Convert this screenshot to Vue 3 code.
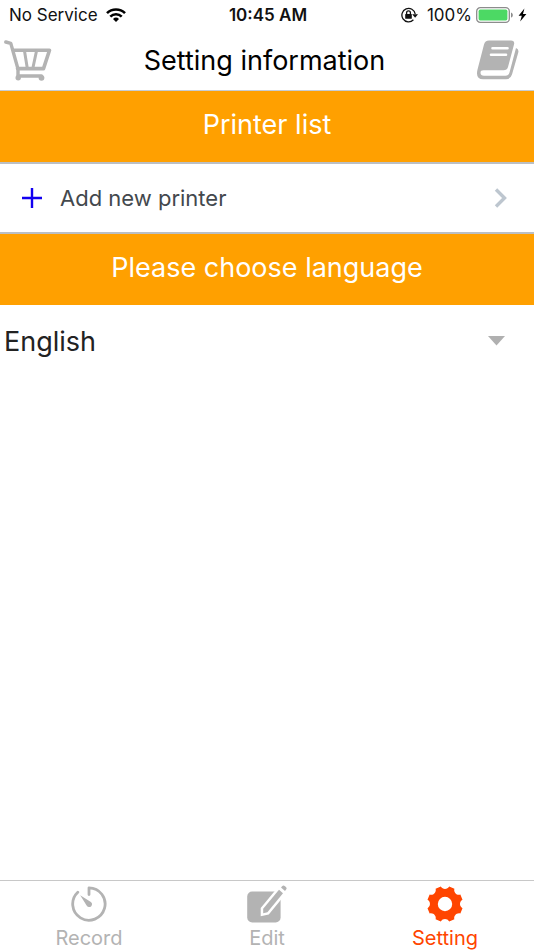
<script setup>
import { ref } from 'vue'

const activeTab = ref('setting')
const language  = ref('en')

const languages = [
  { code: 'en', name: 'English' },
]

const tabs = [
  { id: 'record', label: 'Record' },
  { id: 'edit', label: 'Edit' },
  { id: 'setting', label: 'Setting' },
]

// Outline of the eight-toothed gear, centred on 0,0
const gearPath = () => {
  const at = (r, deg) => {
    const a = (deg * Math.PI) / 180
    return `${(r * Math.sin(a)).toFixed(2)} ${(-r * Math.cos(a)).toFixed(2)}`
  }
  let d = ''
  for (let k = 0; k < 8; k++) {
    const mid = 22.5 + k * 45
    d += `${k ? 'L' : 'M'}${at(18, mid - 9)}L${at(18, mid + 9)}`
    d += `C${at(14.4, mid + 13)} ${at(14.4, mid + 32)} ${at(18, mid + 36)}`
  }
  return d + 'ZM7.2 0A7.2 7.2 0 1 0 -7.2 0A7.2 7.2 0 1 0 7.2 0Z'
}
const gear = gearPath()
</script>

<template>
  <div class="app">

    <!-- Status bar -->
    <div class="status-bar">
      <div class="status-side">
        <span>No Service</span>
        <svg width="20" height="14" viewBox="0 0 20 14" fill="none" stroke="#000" stroke-width="2.6" aria-hidden="true">
          <path d="M1 5.2a12.8 12.8 0 0118 0"/>
          <path d="M4.3 8.6a8.1 8.1 0 0111.4 0"/>
          <path d="M10 14l-3-3a4.3 4.3 0 016 0z" fill="#000" stroke="none"/>
        </svg>
      </div>
      <span class="status-time">10:45 AM</span>
      <div class="status-side status-side--right">
        <svg class="lock-icon" width="18" height="16" viewBox="0 0 18 16" fill="none" stroke="#111" aria-hidden="true">
          <path d="M12.4 12.8A6.7 6.7 0 1114.2 7" stroke-width="1.3"/>
          <path d="M11.2 7.2h5.8l-2.9 3.6z" fill="#111" stroke="none"/>
          <rect x="4.2" y="7" width="6.6" height="4.8" rx="0.6" fill="#111" stroke="none"/>
          <path d="M5.6 7.2V5.8a1.9 1.9 0 013.8 0v1.4" stroke-width="1.3"/>
        </svg>
        <span>100%</span>
        <svg width="38" height="16" viewBox="0 0 38 16" aria-hidden="true">
          <rect x="0.7" y="0.7" width="32.6" height="14.6" rx="3.6" fill="none" stroke="#8c8c8c" stroke-width="1.3"/>
          <rect x="2.6" y="2.6" width="28.8" height="10.8" rx="1.6" fill="#4cd964"/>
          <path d="M35 5.4c2.4 0.8 2.4 4.4 0 5.2z" fill="#8c8c8c"/>
        </svg>
        <svg width="9" height="14" viewBox="0 0 9 14" aria-hidden="true">
          <path d="M6.4 0.5L0.6 7.7h3.2L2.2 13.5 8.4 5.9H5z" fill="#000"/>
        </svg>
      </div>
    </div>

    <!-- Header -->
    <header class="header">
      <button class="header-btn" type="button" aria-label="Cart">
        <svg width="48" height="42" viewBox="0 0 48 42" fill="none" stroke="#b3b3b3"
          stroke-linecap="round" stroke-linejoin="round" aria-hidden="true">
          <path d="M1.8 3l5 1.4L14 30v7h23.5" stroke-width="3.4"/>
          <path d="M9.5 11.2h36L39.5 29.6H13.5" stroke-width="3.6"/>
          <path d="M20.5 12l2.6 16M32.5 12l-3.4 16" stroke-width="3"/>
          <circle cx="14.2" cy="38.8" r="2.7" fill="#b3b3b3" stroke="none"/>
          <circle cx="37.5" cy="38.8" r="2.9" fill="#b3b3b3" stroke="none"/>
        </svg>
      </button>
      <h1 class="title">Setting information</h1>
      <button class="header-btn" type="button" aria-label="Manual">
        <svg width="42" height="40" viewBox="0 0 42 40" aria-hidden="true">
          <path d="M12 0.5h22q4 0 3 4L31 27q-1 3.3-4.5 3.3H6.5q-3 0-3 2.4 0 3 3.5 3h21.5q3 0 4-3.2L39 8q3.2 1.4 2.2 4.8L35 34.5q-1.5 4.8-6 4.8H6q-6 0-6-5.8 0-1.6 0.4-3.5L7 4.5q1-4 5-4z" fill="#b3b3b3"/>
          <path d="M15.5 8.2h15M14 14.8h15" fill="none" stroke="#fff" stroke-width="2.6" stroke-linecap="round"/>
        </svg>
      </button>
    </header>

    <!-- Printers -->
    <main class="content">
      <h2 class="section-title">Printer list</h2>
      <button class="row" type="button">
        <svg width="20" height="20" viewBox="0 0 20 20" fill="none" stroke="#1200f0" stroke-width="2.4" aria-hidden="true">
          <path d="M10 0v20M0 10h20"/>
        </svg>
        <span class="row-label">Add new printer</span>
        <svg width="14" height="20" viewBox="0 0 14 20" fill="none" stroke="#bdc6cf" stroke-width="3.4" aria-hidden="true">
          <path d="M2 1.5l8.5 8.5L2 18.5"/>
        </svg>
      </button>

      <!-- Language -->
      <h2 class="section-title section-title--last"><label for="language">Please choose language</label></h2>
      <div class="select-wrap">
        <select id="language" v-model="language" class="select">
          <option v-for="l in languages" :key="l.code" :value="l.code">{{ l.name }}</option>
        </select>
        <svg class="select-arrow" width="17" height="10" viewBox="0 0 17 10" aria-hidden="true">
          <path d="M0 0h17L8.5 9.5z" fill="#b0b0b0"/>
        </svg>
      </div>
    </main>

    <!-- Bottom tabs -->
    <nav class="tab-bar">
      <button
        v-for="tab in tabs"
        :key="tab.id"
        type="button"
        :class="['tab', activeTab === tab.id ? 'tab--active' : '']"
        @click="activeTab = tab.id"
      >
        <svg v-if="tab.id === 'record'" width="40" height="38" viewBox="-20 -19 40 38" fill="none" stroke="currentColor" aria-hidden="true">
          <path d="M0 -9.5V-16.2A16.2 16.2 0 11-11.2 -11.8" stroke-width="2.8" stroke-linecap="round" stroke-linejoin="round"/>
          <path d="M-8.8 -8.8L1.9 -2.1A2.9 2.9 0 11-2.4 1.6z" fill="currentColor" stroke="none"/>
        </svg>
        <svg v-else-if="tab.id === 'edit'" width="40" height="38" viewBox="0 0 40 38" aria-hidden="true">
          <rect x="0.2" y="6.6" width="33.4" height="30.8" rx="5" fill="currentColor"/>
          <path d="M16.2 28.2v-4.4L32 4.8l4 3.5L20.4 27.3z" fill="currentColor" stroke="#fff" stroke-width="5"/>
          <path d="M16.2 28.2v-4.4L32 4.8l4 3.5L20.4 27.3z" fill="currentColor"/>
          <path d="M34 2.6l1.1-1.4q1.2-1.4 2.6-0.2l1.2 1q1.4 1.2 0.2 2.6L38 6z" fill="currentColor"/>
        </svg>
        <svg v-else width="40" height="38" viewBox="-20 -19 40 38" aria-hidden="true">
          <path :d="gear" fill="currentColor" fill-rule="evenodd"/>
        </svg>
        <span class="tab-label">{{ tab.label }}</span>
      </button>
    </nav>

  </div>
</template>

<style>
body {
  margin: 0;
  background: #fff;
}
</style>

<style scoped>
.app {
  display: flex;
  flex-direction: column;
  min-height: 100vh;
  font-family: Inter, Roboto, sans-serif;
  color: #111;
}
button,
select {
  font-family: inherit;
  border: none;
  border-radius: 0;
  background: none;
  padding: 0;
  margin: 0;
  cursor: pointer;
}
svg {
  display: block;
  flex-shrink: 0;
}

/* Status bar */
.status-bar {
  display: flex;
  align-items: center;
  height: 30px;
  padding: 0 7px 0 9px;
  font-size: 17px;
}
.status-side {
  display: flex;
  flex: 1;
  align-items: center;
  gap: 8px;
}
.status-side--right {
  justify-content: flex-end;
  gap: 4px;
}
.lock-icon {
  margin-right: 4px;
}
.status-time {
  font-weight: 600;
}

/* Header */
.header {
  display: flex;
  align-items: center;
  justify-content: space-between;
  height: 60px;
  padding: 0 15px 0 4px;
  border-bottom: 1px solid #c6ccd4;
}
.title {
  margin: 0;
  font-size: 27px;
  font-weight: 400;
  color: #000;
}

/* Content */
.content {
  flex: 1;
}
.section-title {
  margin: 0;
  padding: 16px 0 20px;
  border-bottom: 2px solid #bbbfc4;
  background: #ffa000;
  color: #fff;
  font-size: 27px;
  font-weight: 400;
  line-height: 35px;
  text-align: center;
}
.section-title--last {
  border-bottom: none;
}
.row {
  display: flex;
  align-items: center;
  width: 100%;
  height: 70px;
  padding: 0 26px 0 22px;
  border-bottom: 2px solid #bbbfc4;
}
.row-label {
  flex: 1;
  padding-left: 18px;
  color: #43484d;
  font-size: 22px;
  text-align: left;
}
.select-wrap {
  display: grid;
  align-items: center;
}
.select {
  grid-area: 1 / 1;
  width: 100%;
  height: 72px;
  padding: 0 48px 0 4px;
  appearance: none;
  color: #222;
  font-size: 27px;
}
.select-arrow {
  grid-area: 1 / 1;
  justify-self: end;
  margin-right: 29px;
  pointer-events: none;
}

/* Bottom tabs */
.tab-bar {
  display: flex;
  border-top: 1px solid #c8c8c8;
}
.tab {
  display: flex;
  flex: 1;
  flex-direction: column;
  align-items: center;
  gap: 4px;
  padding: 4px 0 0;
  color: #b3b3b3;
}
.tab--active {
  color: #ff4500;
}
.tab-label {
  font-size: 20px;
  line-height: 23px;
}
</style>
